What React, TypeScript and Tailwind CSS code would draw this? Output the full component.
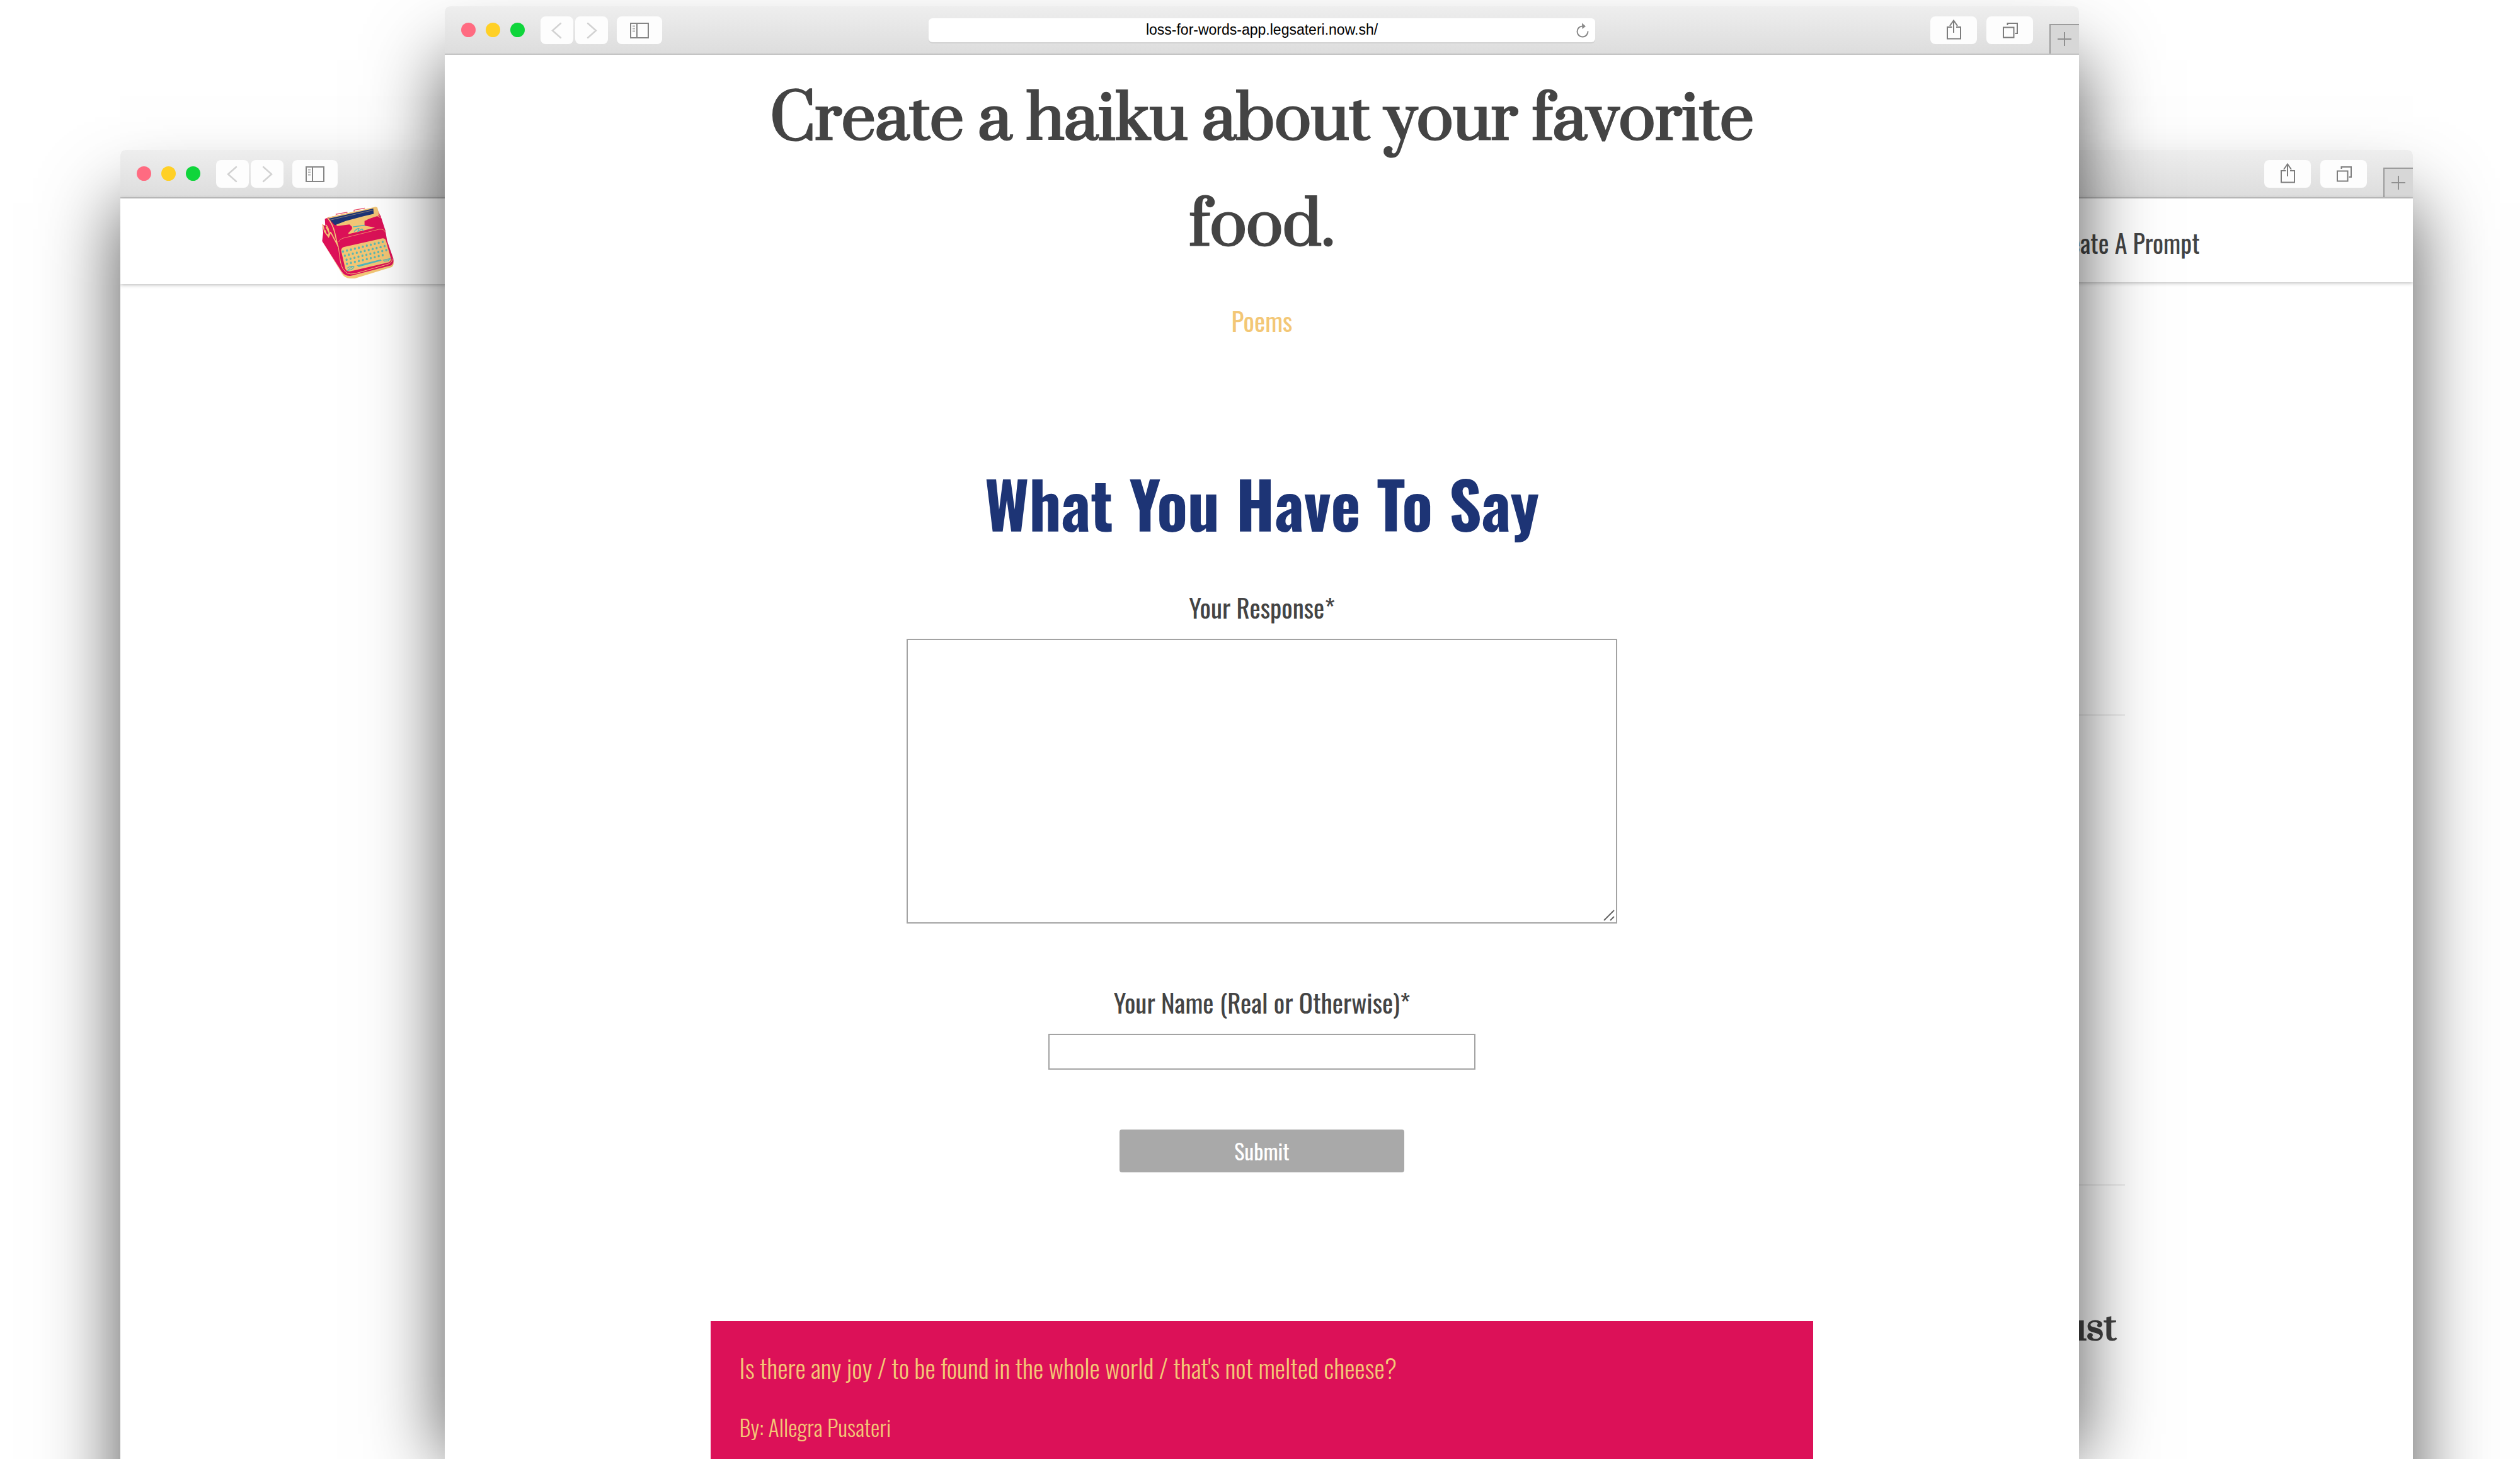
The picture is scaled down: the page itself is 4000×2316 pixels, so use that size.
import type { ReactNode } from "react";

const CONDENSED = "font-[Oswald,'Liberation_Sans_Narrow','Roboto_Condensed','Liberation_Sans',sans-serif]";

function ToolButton({ label, size, children }: { label: string; size: string; children: ReactNode }) {
  return (
    <button type="button" aria-label={label} className={`h-11 shrink-0 rounded-lg bg-[#fdfdfd] ${size}`}>
      {children}
    </button>
  );
}

function Toolbar({ url }: { url?: string }) {
  return (
    <div className="flex h-[77px] shrink-0 items-center rounded-t-lg border-b-2 border-[#c3c3c3] bg-linear-to-b from-[#eeeeee] to-[#dddddd]">
      <div className="flex flex-1 items-center">
        <div className="ml-[26px] flex gap-4">
          <span className="size-[23px] rounded-full bg-[#ff6b81]" />
          <span className="size-[23px] rounded-full bg-[#ffd026]" />
          <span className="size-[23px] rounded-full bg-[#0fd53b]" />
        </div>
        <div className="ml-[25px] flex gap-[3px]">
          <ToolButton label="Back" size="w-[52px]">
            <svg viewBox="0 0 52 44" className="size-full" fill="none" stroke="#d2d2d2" strokeWidth="2.5" strokeLinecap="round">
              <path d="M32 11 19 22.5 32 34" />
            </svg>
          </ToolButton>
          <ToolButton label="Forward" size="w-[52px]">
            <svg viewBox="0 0 52 44" className="size-full" fill="none" stroke="#d2d2d2" strokeWidth="2.5" strokeLinecap="round">
              <path d="M20 11 33 22.5 20 34" />
            </svg>
          </ToolButton>
        </div>
        <div className="ml-3.5 flex">
          <ToolButton label="Sidebar" size="w-[72px]">
            <svg viewBox="0 0 72 44" className="size-full" fill="none" stroke="#858585" strokeWidth="2">
              <rect x="22" y="11" width="28" height="23" />
              <path d="M32 11v23" />
              <path d="M25 15.5h4M25 19.5h4M25 23.5h4" stroke="#b0b0b0" />
            </svg>
          </ToolButton>
        </div>
      </div>
      {url && (
        <div className="relative flex w-[40.8%] items-center">
          <input
            aria-label="Address"
            defaultValue={url}
            className="h-[38px] w-full rounded-md bg-white text-center font-['Liberation_Sans',Arial,sans-serif] text-[23px] text-black shadow-[0_2px_0_#d2d2d2] outline-none"
          />
          <button type="button" aria-label="Reload" className="absolute right-2.5 h-6 w-5">
            <svg viewBox="0 0 20 24" className="size-full" fill="none" stroke="#8a8a8a" strokeWidth="2">
              <path d="M18.5 13.5A8.5 8.5 0 1 1 10 5.5" />
              <path d="M9 0.5 15 5.8 9.5 10Z" fill="#8a8a8a" stroke="none" />
            </svg>
          </button>
        </div>
      )}
      <div className="flex flex-1 items-center justify-end self-stretch">
        <div className="flex gap-[15px]">
          <ToolButton label="Share" size="w-[74px]">
            <svg viewBox="0 0 74 44" className="size-full" fill="none" stroke="#7d7d7d" strokeWidth="2">
              <path d="M34.5 17H27v18.5h21V17h-7" />
              <path d="M37 26V7M31 15l6-8.5 6 8.5" />
            </svg>
          </ToolButton>
          <ToolButton label="Show tabs" size="w-[74px]">
            <svg viewBox="0 0 74 44" className="size-full" fill="none" stroke="#7d7d7d" strokeWidth="2">
              <path d="M27 17.5h16.500v16H27z" />
              <path d="M33.500 14v-3H49v16h-3.500" />
            </svg>
          </ToolButton>
        </div>
        <button
          type="button"
          aria-label="New tab"
          className="ml-[26px] h-[47px] w-[47px] self-end border-t-2 border-l-2 border-[#9c9c9c] bg-[#d7d7d7]"
        >
          <svg viewBox="0 0 45 45" className="size-full" fill="none" stroke="#909090" strokeWidth="2">
            <path d="M22 11v22M11 22h22" />
          </svg>
        </button>
      </div>
    </div>
  );
}

function BrowserWindow({ place, url, children }: { place: string; url?: string; children: ReactNode }) {
  return (
    <section
      className={`absolute w-[64.85%] before:absolute before:inset-x-0 before:top-[85px] before:bottom-0 before:shadow-[0_0_114px_rgba(0,0,0,0.68)] before:content-[''] ${place}`}
    >
      <div className="relative flex h-full flex-col overflow-hidden rounded-t-lg bg-white">
        <Toolbar url={url} />
        {children}
      </div>
    </section>
  );
}

const KEY_ROWS = [
  { x: 193, y: 296, n: 11 },
  { x: 202, y: 316, n: 11 },
  { x: 210, y: 335, n: 11 },
  { x: 212, y: 355, n: 10 },
];

function TypewriterLogo() {
  return (
    <svg viewBox="90 78 348 350" className="size-[116px]" role="img" aria-label="Loss for Words">
      <path d="M93 246 188 402q14 22 40 23h22l176-54q12-8 9-28l-6-12L190 400Z" fill="#f3c776" />
      <path
        d="M106 140 124 132 352 84 374 128 396 196 404 244 434 330q4 22-10 32L232 412q-30 4-46-20L93 246 98 206 94 166l14 6Z"
        fill="#dc1158"
      />
      <path d="M158 118 212 108v10M246 106v-8l52-10" fill="none" stroke="#e8506c" strokeWidth="4" />
      <path d="M122 132 350 82l8 4 6 38-48 16-18 10 2 18 46 14-126 30-4-8 22-24-14-14-58 8Z" fill="#f3c776" />
      <path d="M124 138 338 90l2 26-46 10-88 24-52 20Z" fill="#1d3475" />
      <path d="M128 146 336 98" stroke="#f3c776" strokeWidth="1.500" />
      <path d="M296 150 360 134l8 4 18 40-46 2-44-8Z" fill="#dc1158" />
      <path d="M160 188 214 174l24 12-24 26-44 14Z" fill="#dc1158" />
      <path d="M346 88 352 122 372 134M354 84l14 40" fill="none" stroke="#f3c776" strokeWidth="3" />
      <path
        d="M118 134q26 30 36 74l14 64M110 168q18 16 16 50-18-2-18-24M112 178l12 24M96 166l8 34 20 26 10-24M134 204l32 60"
        fill="none"
        stroke="#f3c776"
        strokeWidth="5"
      />
      <path d="M240 178 298 170M246 200q16-16 24-14l-6 14 20-12 8 10" fill="none" stroke="#4fb7bd" strokeWidth="4" />
      <path d="M172 250q6-14 22-18l170-42q26-4 32 14" fill="none" stroke="#f08a6c" strokeWidth="3" />
      <path d="M184 292q0-14 14-18l178-40q16-4 22 8l24 86q2 14-10 20L230 390q-20 4-26-12Z" fill="#f3c776" />
      <path d="M170 268 180 342q8 44 34 58 14 6 36 2l160-46q20-8 18-26" fill="none" stroke="#f3c776" strokeWidth="3" />
      {KEY_ROWS.map((row) =>
        Array.from({ length: row.n }, (_, i) => (
          <ellipse key={`${row.y}-${i}`} cx={row.x + i * 19} cy={row.y - i * 4.6} rx="5" ry="6" fill="#5fb8b2" />
        )),
      )}
      <path d="M258 362 374 334l4 6-110 30Z" fill="#4fb7bd" />
      <path
        d="M212 376q18-14 34-6-8 14-30 16 12-14 28-20M384 338l34-8-8 10-22 2"
        fill="none"
        stroke="#4fb7bd"
        strokeWidth="4"
      />
    </svg>
  );
}

export default function App() {
  return (
    <div className={`relative h-screen overflow-hidden bg-white text-[#444444] ${CONDENSED}`}>
      <BrowserWindow place="top-[238px] -bottom-[228px] left-[4.775%]">
        <nav className="flex h-[136px] shrink-0 items-center pt-1 pl-[12.300%] shadow-[0_1px_6px_rgba(0,0,0,0.3)]">
          <a href="#home">
            <TypewriterLogo />
          </a>
        </nav>
      </BrowserWindow>

      <BrowserWindow place="top-[238px] -bottom-[228px] right-[4.25%]">
        <nav className="flex h-[133px] shrink-0 items-center justify-end pt-1.5 pr-[13.050%] shadow-[0_1px_6px_rgba(0,0,0,0.3)]">
          <a href="#create" className="text-[40px] leading-[60px]">
            Create A Prompt
          </a>
        </nav>
        <div className="flex flex-col px-[17.600%] pt-[686px]">
          <hr className="border-t-2 border-[#ececec]" />
          <hr className="mt-[744px] border-t-2 border-[#ececec]" />
          <h2 className="mt-[172px] pr-3.5 text-right font-[Suranna,'Liberation_Serif',serif] text-[74px] leading-[100px] font-normal [-webkit-text-stroke:2px_#444444]">
            just
          </h2>
        </div>
      </BrowserWindow>

      <BrowserWindow place="top-[10px] bottom-0 left-[17.650%]" url="loss-for-words-app.legsateri.now.sh/">
        <main className="flex flex-col items-center pt-3">
          <h1 className="w-[67.500%] text-center font-[Suranna,'Liberation_Serif',serif] text-[122px] leading-[168px] font-normal [-webkit-text-stroke:3px_#444444]">
            Create a haiku about your favorite food.
          </h1>
          <a href="#poems" className="mt-11 text-[41px] leading-[60px] text-[#f3c776]">
            Poems
          </a>
          <h2 className="mt-[200px] text-[101px] leading-[120px] font-bold text-[#1d3475]">What You Have To Say</h2>
          <form className="flex w-full flex-col items-center" onSubmit={(e) => e.preventDefault()}>
            <label htmlFor="response" className="mt-[75px] text-[41px] leading-[60px]">
              Your Response*
            </label>
            <div className="relative mt-5 h-[452px] w-[43.500%]">
              <textarea
                id="response"
                className="size-full resize-none border-2 border-[#a3a3a3] p-2 text-[41px] outline-none"
              />
              <svg
                viewBox="0 0 18 18"
                className="pointer-events-none absolute right-1 bottom-1 size-[18px]"
                fill="none"
                stroke="#666666"
                strokeWidth="2"
              >
                <path d="M1 17 17 1M11 17l6-6" />
              </svg>
            </div>
            <label htmlFor="name" className="mt-[95px] text-[41px] leading-[60px]">
              Your Name (Real or Otherwise)*
            </label>
            <input
              id="name"
              type="text"
              className="mt-5 h-[57px] w-[26.100%] border-2 border-[#a3a3a3] px-2 text-[34px] outline-none"
            />
            <button
              type="submit"
              className="mt-[95px] h-[68px] w-[17.400%] rounded-sm bg-[#a9a9a9] text-[34px] leading-[60px] text-white"
            >
              Submit
            </button>
          </form>
          <article className="mt-[236px] w-[67.500%] bg-[#dc1158] px-[46px] py-11 font-light text-[#f3c776]">
            <p className="text-[41px] leading-[60px]">
              Is there any joy / to be found in the whole world / that's not melted cheese?
            </p>
            <p className="mt-[34px] text-[36px] leading-[60px]">By: Allegra Pusateri</p>
          </article>
        </main>
      </BrowserWindow>
    </div>
  );
}
